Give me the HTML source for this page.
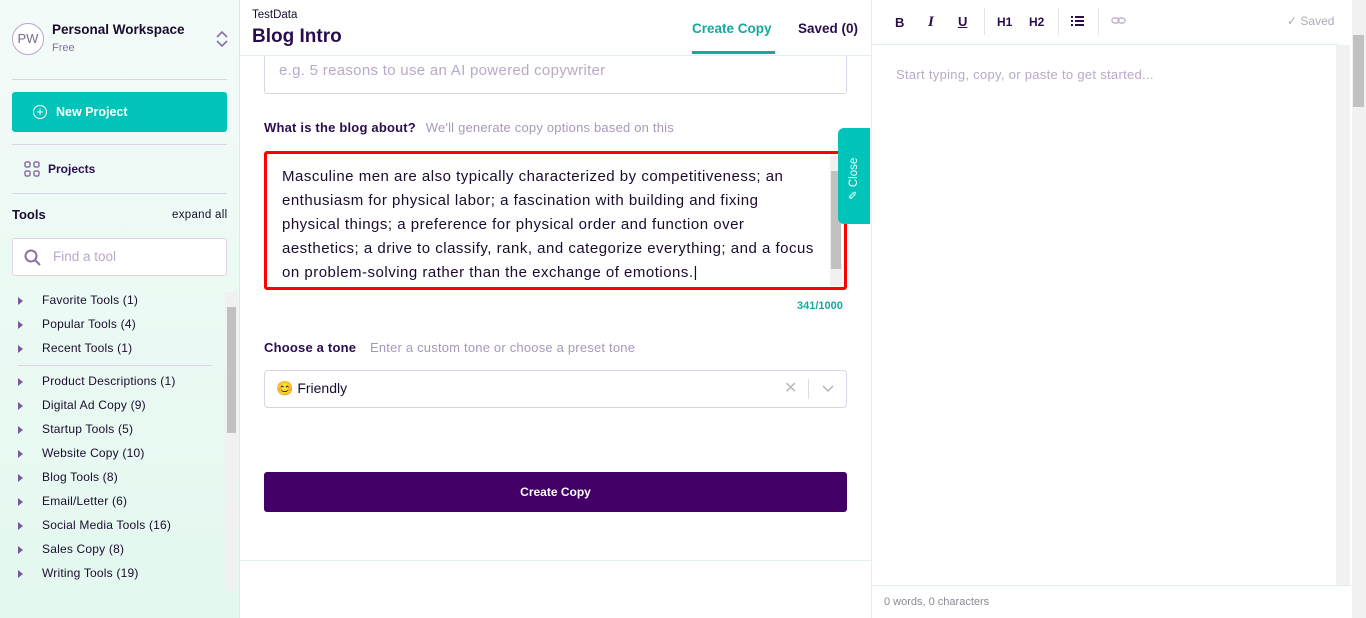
<!DOCTYPE html>
<html><head><style>
*{box-sizing:border-box;margin:0;padding:0}
body{width:1366px;height:618px;overflow:hidden;font-family:"Liberation Sans",sans-serif;background:#fff;position:relative;color:#1a0b2e}
.abs{position:absolute}
#side{left:0;top:0;width:240px;height:618px;background:linear-gradient(180deg,#f3fbf8 0%,#e3f8ef 100%);border-right:1px solid #e4e4ea}
.hr{position:absolute;left:12px;width:215px;height:1px;background:#ddd3e6}
.tool{position:absolute;left:18px;font-size:12px;color:#1a0b2e;letter-spacing:0.2px}
.tool:before{content:"";display:inline-block;border-left:5px solid #7a5a9a;border-top:4px solid transparent;border-bottom:4px solid transparent;margin-right:19px;vertical-align:-1px}
</style></head><body>
<div id="side" class="abs">
 <div class="abs" style="left:12px;top:23px;width:32px;height:32px;border-radius:50%;border:1px solid #b9a6cc;background:#fff;font-size:13px;color:#7a6a8a;text-align:center;line-height:30px">PW</div>
 <div class="abs" style="left:52px;top:22px;font-size:13.5px;font-weight:bold">Personal Workspace</div>
 <div class="abs" style="left:52px;top:42px;font-size:11px;color:#8a70a8">Free</div>
 <svg class="abs" style="left:215px;top:30px" width="14" height="18"><path d="M2 7l5-5 5 5M2 11l5 5 5-5" fill="none" stroke="#8a70a8" stroke-width="1.6"/></svg>
 <div class="hr" style="top:79px"></div>
 <div class="abs" style="left:12px;top:92px;width:215px;height:40px;background:#00c4b8;border-radius:3px;color:#fff;font-size:12.5px;font-weight:bold;line-height:40px;padding-left:44px">New Project
  <span class="abs" style="left:21px;top:13px;width:14px;height:14px;border:1.5px solid #fff;border-radius:50%;line-height:11px;text-align:center;font-size:13px;font-weight:normal">+</span></div>
 <div class="hr" style="top:144px"></div>
 <svg class="abs" style="left:24px;top:161px" width="16" height="16"><g fill="none" stroke="#8a70a8" stroke-width="1.5"><rect x="1" y="1" width="5" height="5" rx="1.5"/><rect x="10" y="1" width="5" height="5" rx="1.5"/><rect x="1" y="10" width="5" height="5" rx="1.5"/><rect x="10" y="10" width="5" height="5" rx="1.5"/></g></svg>
 <div class="abs" style="left:48px;top:162px;font-size:12px;font-weight:bold;color:#2a0d4e">Projects</div>
 <div class="hr" style="top:193px"></div>
 <div class="abs" style="left:12px;top:207px;font-size:13px;font-weight:bold">Tools</div>
 <div class="abs" style="left:172px;top:209px;font-size:11.5px;letter-spacing:0.3px">expand all</div>
 <div class="abs" style="left:12px;top:238px;width:215px;height:38px;background:#fff;border:1px solid #ddd3e6;border-radius:3px;font-size:13.5px;color:#b9a8c9;line-height:36px;padding-left:40px">Find a tool
  <svg class="abs" style="left:11px;top:10px" width="18" height="18"><circle cx="7" cy="7" r="5.5" fill="none" stroke="#8a70a8" stroke-width="2"/><path d="M11 11l5 5" stroke="#8a70a8" stroke-width="2"/></svg></div>
 <div class="tool" style="top:293px">Favorite Tools (1)</div>
 <div class="tool" style="top:317px">Popular Tools (4)</div>
 <div class="tool" style="top:341px">Recent Tools (1)</div>
 <div class="abs" style="left:18px;top:365px;width:194px;height:1px;background:#ddd3e6"></div>
 <div class="tool" style="top:374px">Product Descriptions (1)</div>
 <div class="tool" style="top:398px">Digital Ad Copy (9)</div>
 <div class="tool" style="top:422px">Startup Tools (5)</div>
 <div class="tool" style="top:446px">Website Copy (10)</div>
 <div class="tool" style="top:470px">Blog Tools (8)</div>
 <div class="tool" style="top:494px">Email/Letter (6)</div>
 <div class="tool" style="top:518px">Social Media Tools (16)</div>
 <div class="tool" style="top:542px">Sales Copy (8)</div>
 <div class="tool" style="top:566px">Writing Tools (19)</div>
 <div class="abs" style="left:225px;top:292px;width:13px;height:298px;background:#f1f1f1"></div>
 <div class="abs" style="left:227px;top:307px;width:9px;height:126px;background:#c1c1c1"></div>
</div>
<!-- middle -->
<div class="abs" style="left:252px;top:9px;font-size:11.5px">TestData</div>
<div class="abs" style="left:252px;top:26px;font-size:19px;font-weight:bold;color:#2a0d4e">Blog Intro</div>
<div class="abs" style="left:692px;top:21px;font-size:13.5px;font-weight:bold;color:#16a89e">Create Copy</div>
<div class="abs" style="left:692px;top:51px;width:83px;height:3px;background:#16a89e"></div>
<div class="abs" style="left:798px;top:21px;font-size:13.5px;font-weight:bold;color:#2a0d4e">Saved (0)</div>
<div class="abs" style="left:240px;top:55px;width:632px;height:1px;background:#ddf2ea"></div>
<div class="abs" style="left:264px;top:56px;width:583px;height:38px;border:1px solid #ddd3e6;border-top:none;border-radius:0 0 3px 3px;font-size:15px;color:#b9a8c9;padding:6px 0 0 14px;letter-spacing:0.3px">e.g. 5 reasons to use an AI powered copywriter</div>
<div class="abs" style="left:264px;top:120px;font-size:13px;font-weight:bold;color:#2a0d4e;letter-spacing:0.2px">What is the blog about? <span style="font-weight:normal;color:#a898b8;margin-left:6px">We'll generate copy options based on this</span></div>
<div class="abs" style="left:264px;top:151px;width:583px;height:139px;border:3px solid #f00;border-radius:3px;font-size:15px;line-height:24px;color:#1a0b2e;padding:11px 0 0 15px;white-space:nowrap;letter-spacing:0.5px;overflow:hidden">Masculine men are also typically characterized by competitiveness; an<br>enthusiasm for physical labor; a fascination with building and fixing<br>physical things; a preference for physical order and function over<br>aesthetics; a drive to classify, rank, and categorize everything; and a focus<br>on problem-solving rather than the exchange of emotions.|
 <div class="abs" style="right:2px;top:2px;width:12px;height:130px;background:#f1f1f1"></div>
 <div class="abs" style="right:3px;top:17px;width:10px;height:98px;background:#c1c1c1"></div></div>
<div class="abs" style="left:797px;top:300px;font-size:11px;font-weight:bold;color:#16a89e">341/1000</div>
<div class="abs" style="left:838px;top:128px;width:32px;height:96px;background:#00c4b8;border-radius:6px 0 0 6px"><div class="abs" style="left:8px;top:72px;transform:rotate(-90deg);transform-origin:0 0;color:#fff;font-size:11.5px;white-space:nowrap">✎ Close</div></div>
<div class="abs" style="left:264px;top:340px;font-size:13px;font-weight:bold;color:#2a0d4e;letter-spacing:0.2px">Choose a tone <span style="font-weight:normal;color:#a898b8;margin-left:10px">Enter a custom tone or choose a preset tone</span></div>
<div class="abs" style="left:264px;top:370px;width:583px;height:38px;border:1px solid #ddd3e6;border-radius:4px;font-size:14px;padding:9px 0 0 11px">😊 Friendly
 <span class="abs" style="left:519px;top:7px;color:#bbb;font-size:16px">✕</span>
 <span class="abs" style="left:543px;top:8px;width:1px;height:20px;background:#ddd"></span>
 <svg class="abs" style="left:556px;top:13px" width="14" height="10"><path d="M2 2l5 5 5-5" fill="none" stroke="#bbb" stroke-width="1.6"/></svg></div>
<div class="abs" style="left:264px;top:472px;width:583px;height:40px;background:#420066;border-radius:3px;color:#fff;font-size:12px;font-weight:bold;text-align:center;line-height:40px">Create Copy</div>
<div class="abs" style="left:240px;top:560px;width:632px;height:1px;background:#ddf2ea"></div>
<div class="abs" style="left:871px;top:0;width:1px;height:618px;background:#ddf2ea"></div>
<!-- right -->
<div class="abs" style="left:872px;top:0;width:494px;height:44px;font-size:13px;font-weight:bold;color:#2a0d4e">
 <span class="abs" style="left:23px;top:15px">B</span>
 <span class="abs" style="left:56px;top:14px;font-family:'Liberation Serif',serif;font-style:italic;font-size:15px">I</span>
 <span class="abs" style="left:86px;top:14px;text-decoration:underline">U</span>
 <span class="abs" style="left:112px;top:8px;width:1px;height:27px;background:#e4e4ea"></span>
 <span class="abs" style="left:125px;top:15px;font-size:12px">H1</span>
 <span class="abs" style="left:157px;top:15px;font-size:12px">H2</span>
 <span class="abs" style="left:186px;top:8px;width:1px;height:27px;background:#e4e4ea"></span>
 <svg class="abs" style="left:199px;top:15px" width="14" height="13"><g fill="#2a0d4e"><rect x="0" y="1" width="2" height="2"/><rect x="0" y="5" width="2" height="2"/><rect x="0" y="9" width="2" height="2"/><rect x="4" y="1" width="9" height="2"/><rect x="4" y="5" width="9" height="2"/><rect x="4" y="9" width="9" height="2"/></g></svg>
 <span class="abs" style="left:226px;top:8px;width:1px;height:27px;background:#e4e4ea"></span>
 <svg class="abs" style="left:239px;top:16px" width="16" height="10"><g fill="none" stroke="#c0b4cc" stroke-width="1.4"><rect x="1" y="2" width="7" height="5" rx="2.5"/><rect x="7" y="2" width="7" height="5" rx="2.5"/></g></svg>
 <span class="abs" style="left:415px;top:14px;font-weight:normal;font-size:12px;color:#b0a8b8">✓ Saved</span>
</div>
<div class="abs" style="left:872px;top:44px;width:466px;height:1px;background:#ddf2ea"></div>
<div class="abs" style="left:896px;top:67px;font-size:13px;color:#b9a8c9;letter-spacing:0.3px">Start typing, copy, or paste to get started...</div>
<div class="abs" style="left:1336px;top:45px;width:14px;height:540px;background:#f1f1f1"></div>
<div class="abs" style="left:1352px;top:0;width:14px;height:618px;background:#f1f1f1"></div>
<div class="abs" style="left:1353px;top:35px;width:11px;height:72px;background:#c1c1c1"></div>
<div class="abs" style="left:872px;top:585px;width:480px;height:1px;background:#ddf2ea"></div>
<div class="abs" style="left:884px;top:596px;font-size:11px;color:#8a8a96">0 words, 0 characters</div>
</body></html>
